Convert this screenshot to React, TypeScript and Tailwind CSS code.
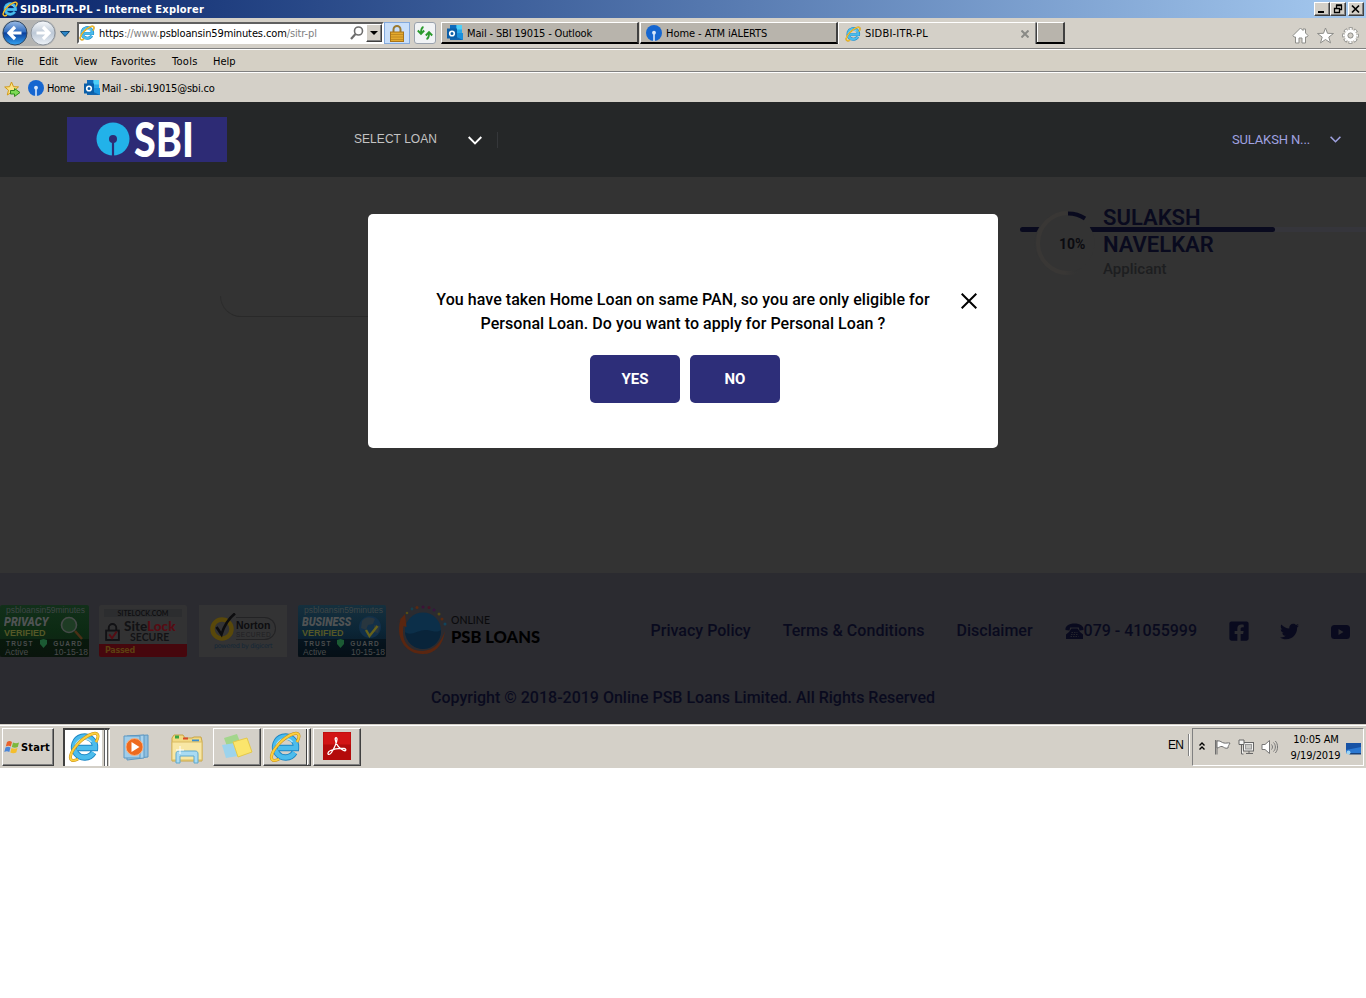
import React from "react";
import { FaFacebookSquare, FaTwitter } from "react-icons/fa";

const UI = "font-['DejaVu_Sans_Condensed','DejaVu_Sans',sans-serif] font-stretch-condensed text-[11px] leading-[14px] whitespace-nowrap";

/* ---------- icons ---------- */

function IeIcon({ className }: { className: string }) {
  return (
    <svg viewBox="0 0 32 32" className={className}>
      <path d="M25.5 21.5A10.5 10.5 0 1 1 27 17H9" fill="none" stroke="#1c86c4" strokeWidth="6.4" />
      <path d="M25.5 21.5A10.5 10.5 0 1 1 27 17H9" fill="none" stroke="#4cbcec" strokeWidth="4.6" />
      <path d="M7.5 14a9.5 9.5 0 0 1 16-3" fill="none" stroke="#a5e4fb" strokeWidth="1.6" />
      <path d="M28 11C32 4 29.500 1 24 3 14 6.500 4 18 2.500 25c-.8 4.500 2.500 6 7.500 3" fill="none" stroke="#c98f13" strokeWidth="3" />
      <path d="M28 11C32 4 29.500 1 24 3 14 6.500 4 18 2.500 25c-.8 4.500 2.500 6 7.500 3" fill="none" stroke="#fbcf3e" strokeWidth="2" />
    </svg>
  );
}

function OutlookIcon() {
  return (
    <svg viewBox="0 0 16 16" className="size-4 shrink-0">
      <path d="M3 0h12v9H3z" fill="#28a8ea" />
      <path d="M3 0h6.500v4.500H3z" fill="#0f6cbd" />
      <path d="M9.500 0H15v4.500H9.500z" fill="#4fd0f8" />
      <path d="M3 8h13v7H3z" fill="#1a8fdc" />
      <path d="M3 9l13 6H3z" fill="#1266b0" />
      <rect y="3.500" width="10" height="10" fill="#0a5ea8" />
      <circle cx="5" cy="8.500" r="2.300" fill="none" stroke="#fff" strokeWidth="1.600" />
    </svg>
  );
}

function SbiDot() {
  return (
    <svg viewBox="0 0 16 16" className="size-4 shrink-0">
      <circle cx="8" cy="8" r="8" fill="#1566d0" />
      <circle cx="8" cy="7.700" r="1.900" fill="#d9e8fb" />
      <path d="M8 8v8" stroke="#d9e8fb" strokeWidth="1.600" />
    </svg>
  );
}

function NavArrow({ forward }: { forward?: boolean }) {
  return (
    <svg viewBox="0 0 26 26" className="size-[26px] shrink-0">
      <defs>
        <linearGradient id="navBack" x1="0" y1="0" x2="0" y2="1">
          <stop offset="0" stopColor="#9dbde6" />
          <stop offset="0.450" stopColor="#2f6cc0" />
          <stop offset="0.500" stopColor="#0a3f9c" />
          <stop offset="1" stopColor="#35a4f2" />
        </linearGradient>
        <linearGradient id="navFwd" x1="0" y1="0" x2="0" y2="1">
          <stop offset="0" stopColor="#f8fafc" />
          <stop offset="0.500" stopColor="#bcc8d6" />
          <stop offset="1" stopColor="#eef3f8" />
        </linearGradient>
      </defs>
      <circle cx="13" cy="13" r="12" fill={forward ? "url(#navFwd)" : "url(#navBack)"} stroke={forward ? "#8e959d" : "#31465f"} />
      <path
        d={forward ? "M6.500 13h12M13 7l6 6-6 6" : "M19.500 13h-12M13 7l-6 6 6 6"}
        fill="none"
        stroke="#fff"
        strokeWidth="3.200"
      />
    </svg>
  );
}

function Phone() {
  return (
    <svg viewBox="0 0 19 16" className="mt-[4px] h-4 w-[19px] shrink-0">
      <path d="M.5 7C0 3 4 .5 9.500.5S19 3 18.500 7l-4 .6-.6-3H5.100l-.6 3z" fill="#090a1e" />
      <path d="M6.500 5.500h6L15 9l3 2.500V16H1v-4.500L4 9z" fill="#090a1e" />
      <path d="M6.500 9.500h6M6 11.500h7M5.500 13.500h8" stroke="#2b2b30" strokeWidth=".8" strokeDasharray="1.500 1" />
    </svg>
  );
}

/* ---------- browser chrome ---------- */

function CaptionButton({ children }: { children: React.ReactNode }) {
  return (
    <div className="flex h-[14px] w-4 items-center justify-center border border-t-white border-l-white border-r-[#404040] border-b-[#404040] bg-[#d4d0c8] shadow-[inset_-1px_-1px_0_#808080]">
      <svg viewBox="0 0 14 12" className="h-3 w-[14px] shrink-0" fill="none" stroke="#000">
        {children}
      </svg>
    </div>
  );
}

function TitleBar() {
  return (
    <div className="flex h-[18px] items-center bg-linear-to-r from-[#0a246a] to-[#a6caf0] pr-[2px] pl-[2px]">
      <IeIcon className="size-4" />
      <span className={`${UI} mt-px ml-[2px] grow font-bold tracking-[0.220px] text-white`}>SIDBI-ITR-PL - Internet Explorer</span>
      <div className="flex">
        <CaptionButton>
          <path d="M3 9h6" strokeWidth="2" />
        </CaptionButton>
        <CaptionButton>
          <path d="M5.500 5V2.500h5v4H8.500M5 2h6M3.500 5.500h5v4h-5zM3 5.500h6" strokeWidth="1.300" />
        </CaptionButton>
        <div className="w-[2px]" />
        <CaptionButton>
          <path d="M3 2.500l7 7M10 2.500l-7 7" strokeWidth="1.700" />
        </CaptionButton>
      </div>
    </div>
  );
}

function Tab({ icon, label, className }: { icon: React.ReactNode; label: string; className: string }) {
  return (
    <div className={`flex h-[22px] items-center border-t border-l border-r-2 border-white border-r-[#404040] pt-px pl-[5px] ${className}`}>
      {icon}
      <span className={`${UI} mt-[2px] ml-1 grow`}>{label}</span>
    </div>
  );
}

function NavBar() {
  return (
    <div className="flex h-[30px] items-start">
      <div className="mt-[2px] ml-[2px] flex gap-[2px] rounded-full bg-[#b4b4b2]">
        <NavArrow />
        <NavArrow forward />
      </div>
      <svg viewBox="0 0 10 6" className="mt-[13px] ml-[4px] h-[6px] w-[10px]">
        <path d="M.5.5h9L5 5.500z" fill="#2c86c8" stroke="#12466f" />
      </svg>
      <div className="mt-1 ml-[7px] flex h-[22px] w-[307px] items-center border-2 border-t-[#606060] border-r-white border-b-white border-l-[#606060] bg-white">
        <IeIcon className="size-4" />
        <span className={`${UI} mt-[2px] ml-1 grow tracking-[-0.120px] text-[#808080]`}>
          <span className="text-black">https</span>://www.<span className="text-black">psbloansin59minutes.com</span>/sitr-pl
        </span>
        <svg viewBox="0 0 14 14" className="mr-[2px] size-[14px]" fill="none" stroke="#6d6d6d">
          <circle cx="8.500" cy="5" r="4" strokeWidth="1.600" />
          <path d="M5.500 8L1 13" strokeWidth="2.200" />
        </svg>
        <div className="flex h-[18px] w-4 items-center justify-center border border-t-white border-r-[#404040] border-b-[#404040] border-l-white bg-[#d4d0c8] shadow-[inset_-1px_-1px_0_#808080]">
          <svg viewBox="0 0 8 4" className="h-1 w-2">
            <path d="M0 0h8L4 4z" />
          </svg>
        </div>
      </div>
      <div className="mt-1 flex h-[22px] w-[26px] items-center justify-center border border-[#83a9dc] bg-[#c9dffa]">
        <svg viewBox="0 0 14 17" className="h-[17px] w-[14px]">
          <path d="M3.500 8V4.500a3.500 3.500 0 0 1 7 0V8" fill="none" stroke="#9a7a32" strokeWidth="2" />
          <rect x=".5" y="7" width="13" height="9.500" fill="#e3a92d" stroke="#a8741a" />
          <path d="M1 9.500h12M1 12h12M1 14.500h12" stroke="#b98420" strokeWidth=".8" />
        </svg>
      </div>
      <div className="mt-1 ml-1 flex h-[22px] w-[22px] items-center justify-center rounded-[3px] border border-[#9aa2ad] bg-[#f1f3f5]">
        <svg viewBox="0 0 16 14" className="h-[14px] w-4" fill="none" stroke="#2a9a2c" strokeWidth="1.900">
          <path d="M6.500 1C4.500 1.500 4 3 4 7M.8 4.500L4 7.800l3.200-3.300" />
          <path d="M9.500 13c2-.5 2.500-2 2.500-6M8.800 9.500L12 6.200l3.200 3.300" />
        </svg>
      </div>
      <div className="mt-1 ml-[5px] flex grow">
        <Tab className="w-[198px] border-b-2 border-b-black bg-[#b8b4ac] tracking-[-0.150px]" icon={<OutlookIcon />} label="Mail - SBI 19015 - Outlook" />
        <Tab className="ml-px w-[198px] border-b-2 border-b-black bg-[#b8b4ac] tracking-[-0.060px]" icon={<SbiDot />} label="Home - ATM iALERTS" />
        <div className="flex h-[22px] w-[198px] items-center border-t border-r border-l border-white border-r-[#808080] pt-px pl-[6px]">
          <IeIcon className="size-4" />
          <span className={`${UI} ml-1 grow tracking-[0.200px]`}>SIDBI-ITR-PL</span>
          <svg viewBox="0 0 8 8" className="mr-[6px] size-2" stroke="#8a8a86" strokeWidth="2">
            <path d="M.5.5l7 7M7.500.5l-7 7" />
          </svg>
        </div>
        <div className="h-[22px] w-[29px] border-t border-r-2 border-b-2 border-l border-t-white border-r-[#404040] border-b-black border-l-[#404040] bg-[#b8b4ac] shadow-[inset_1px_0_0_#fff]" />
      </div>
      <div className="mt-[9px] flex gap-2 pr-[7px]">
        <svg viewBox="0 0 17 17" className="size-[17px]">
          <path d="M1 8.500L8.500 1 11 3.500V2h2.500v4L16 8.500 15 10h-1.500v6H10v-5H7v5H3.500v-6H2z" fill="#fff" stroke="#8d8d89" />
        </svg>
        <svg viewBox="0 0 17 17" className="size-[17px]">
          <path d="M8.500 1l2 5.300 6 .2-4.700 3.600 1.700 5.800-5-3.400-5 3.400 1.700-5.800L.5 6.500l6-.2z" fill="#fff" stroke="#8d8d89" />
        </svg>
        <svg viewBox="0 0 17 17" className="size-[17px]">
          <circle cx="8.500" cy="8.500" r="6.600" fill="none" stroke="#8d8d89" strokeWidth="3.400" strokeDasharray="3.584 1.600" strokeDashoffset="1.792" />
          <circle cx="8.500" cy="8.500" r="6.600" fill="none" stroke="#fff" strokeWidth="1.800" strokeDasharray="2.184 3" strokeDashoffset="1.092" />
          <circle cx="8.500" cy="8.500" r="4.300" fill="#d4d0c8" stroke="#fff" strokeWidth="3.400" />
          <circle cx="8.500" cy="8.500" r="2.600" fill="#d4d0c8" stroke="#8d8d89" />
        </svg>
      </div>
    </div>
  );
}

function Chrome() {
  return (
    <div className="flex h-[102px] flex-col bg-[#d4d0c8]">
      <TitleBar />
      <NavBar />
      <div className={`${UI} flex h-6 items-center border-t border-b border-t-[#808080] border-b-[#808080] bg-[#d5d0c5] pt-[3px] pl-[7px] shadow-[inset_0_1px_0_#fff]`}>
        <span className="w-8">File</span>
        <span className="w-[35px]">Edit</span>
        <span className="w-[37px]">View</span>
        <span className="w-[61px]">Favorites</span>
        <span className="w-[41px] tracking-[0.300px]">Tools</span>
        <span>Help</span>
      </div>
      <div className={`${UI} flex grow items-center border-t border-white pl-1`}>
        <svg viewBox="0 0 17 17" className="mt-[3px] size-[17px]">
          <path d="M7.500 1l2 4.700 5 .2-3.900 3.300 1.400 4.800-4.500-2.700L3.300 14l1.200-4.800L.7 6l4.900-.3z" fill="#fbe386" stroke="#d29a17" />
          <path d="M6.500 9.500h4V7.500l5.500 4-5.500 4v-2.500h-4z" fill="#7ddb55" stroke="#318b1e" />
        </svg>
        <span className="ml-[7px] flex items-center gap-[3px] tracking-[-0.400px]">
          <SbiDot />
          <span className="mt-[3px]">Home</span>
        </span>
        <span className="ml-[9px] flex items-center gap-[2px] tracking-[-0.200px]">
          <OutlookIcon />
          <span className="mt-[3px]">Mail - sbi.19015@sbi.co</span>
        </span>
      </div>
    </div>
  );
}

/* ---------- site ---------- */

function SiteHeader() {
  return (
    <header className="flex h-[75px] items-center bg-[#252728] pl-[67px]">
      <div className="flex h-[45px] w-[160px] items-center bg-[#2d2b75] pl-[29px]">
        <svg viewBox="0 0 34 34" className="-mt-px size-[34px] shrink-0">
          <circle cx="17" cy="17" r="16.500" fill="#22b2e9" />
          <circle cx="17" cy="17" r="4" fill="#2d2b75" />
          <path d="M17 18v16" stroke="#2d2b75" strokeWidth="2.200" />
        </svg>
        <span className="ml-1 w-[59px] origin-left scale-x-[0.840] font-[Lato,sans-serif] text-[47px] leading-[45px] font-black text-white">SBI</span>
      </div>
      <span className="-mt-[2px] ml-[127px] w-[114px] font-['Liberation_Sans',sans-serif] text-[12px] tracking-[0.050px] text-[#c3c3c3]">SELECT LOAN</span>
      <svg viewBox="0 0 14 9" className="mt-px h-[9px] w-[14px]" fill="none" stroke="#fff" strokeWidth="1.900">
        <path d="M.7 1L7 7.500 13.300 1" />
      </svg>
      <div className="ml-[15px] h-4 w-px bg-[#35373a]" />
      <span className="mr-[20px] ml-auto font-[Roboto,sans-serif] text-[13px] tracking-[-0.130px] text-[#a0a2e0]">SULAKSH N...</span>
      <svg viewBox="0 0 11 7" className="mr-[25px] h-[7px] w-[11px]" fill="none" stroke="#a0a2e0" strokeWidth="1.600">
        <path d="M.6.8L5.500 5.700 10.400.8" />
      </svg>
    </header>
  );
}

function Applicant() {
  return (
    <div className="relative ml-auto h-[110px] w-[346px] overflow-hidden">
      <div className="absolute top-[50px] left-0 h-[5px] w-[400px] rounded-full bg-[#35353b]">
        <div className="h-[5px] w-[255px] rounded-full bg-[#090a1e]" />
      </div>
      <svg viewBox="0 0 72 72" className="absolute top-[30px] left-3 size-[72px]" fill="none">
        <defs>
          <linearGradient id="ring" x1="0" y1="0" x2="1" y2="0">
            <stop offset="0" stopColor="#393735" />
            <stop offset="0.450" stopColor="#393735" />
            <stop offset="0.700" stopColor="#333333" stopOpacity="0" />
          </linearGradient>
        </defs>
        <circle cx="32.500" cy="36" r="30" fill="#333333" />
        <circle cx="36" cy="36" r="30" stroke="url(#ring)" strokeWidth="4" />
        <path d="M36 6.500A30 30 0 0 1 53 11.500" stroke="#090a1e" strokeWidth="4" />
      </svg>
      <span className="absolute top-[57px] left-[39px] font-[Roboto,sans-serif] text-[14px] leading-5 font-bold text-[#0b0b10]">10%</span>
      <div className="absolute top-[27px] left-[83px] w-[130px] font-[Roboto,sans-serif]">
        <div className="text-[22px] leading-[27px] font-semibold text-[#090a1e]">SULAKSH NAVELKAR</div>
        <div className="mt-px text-[15px] leading-[20px] font-medium text-[#1d1e20]">Applicant</div>
      </div>
    </div>
  );
}

function Dialog() {
  return (
    <div className="absolute top-[37px] left-[368px] flex h-[234px] w-[630px] flex-col items-center rounded-[5px] bg-white pt-[74px] font-[Roboto,sans-serif]">
      <p className="w-[520px] text-center text-[16px] leading-6 font-medium tracking-[0.050px] text-black">
        You have taken Home Loan on same PAN, so you are only eligible for
        <br />
        Personal Loan. Do you want to apply for Personal Loan ?
      </p>
      <div className="mt-[19px] flex gap-[10px] pl-1 text-[15px] font-bold text-white">
        <button className="h-12 w-[90px] rounded-[5px] bg-[#2d2e79]">YES</button>
        <button className="h-12 w-[90px] rounded-[5px] bg-[#2d2e79]">NO</button>
      </div>
      <svg viewBox="0 0 16 16" className="absolute top-[79px] left-[593px] size-4" stroke="#000" strokeWidth="2">
        <path d="M.7.700l14.600 14.600M15.300.700L.7 15.300" />
      </svg>
    </div>
  );
}

function TrustBadge({ word, tone }: { word: string; tone: "green" | "blue" }) {
  const green = tone === "green";
  return (
    <div
      className={`relative flex h-[52px] shrink-0 flex-col rounded-[2px] pl-1 font-['Liberation_Sans',sans-serif] text-[#4a4c4c] ${
        green ? "w-[89px] bg-linear-to-b from-[#12301a] via-[#0c2a13] to-[#0e2013]" : "w-[88px] bg-linear-to-b from-[#15303e] via-[#0b2536] to-[#081722]"
      }`}
    >
      <span className="h-[11px] pl-[2px] text-[8.500px] leading-[11px] tracking-[-0.050px] text-[#3f4545]">psbloansin59minutes</span>
      <span className={`h-[11px] w-[60px] origin-left font-[Roboto,sans-serif] text-[13px] leading-[11px] font-black text-[#505354] italic ${green ? "scale-x-[0.840]" : "scale-x-[0.820]"}`}>{word}</span>
      <span className="h-[12px] text-[9px] leading-[12px] font-bold text-[#555827]">VERIFIED</span>
      <div className="-ml-1 flex h-[18px] flex-col bg-black/35 pl-1">
        <span className="flex h-[9px] items-center justify-between pr-[6px] pl-[2px] text-[6.500px] leading-[9px] font-bold tracking-[1.200px]">
          <span>TRUST</span>
          <svg viewBox="0 0 7 9" className="h-[9px] w-[7px]">
            <path d="M0 1l3.500-1L7 1v4L3.500 9 0 5z" fill="#1b5a33" />
          </svg>
          <span>GUARD</span>
        </span>
        <span className="flex h-[9px] justify-between pr-px pl-px text-[8.500px] leading-[9px]">
          <span>Active</span>
          <span>10-15-18</span>
        </span>
      </div>
      {green ? (
        <svg viewBox="0 0 26 26" className="absolute top-[10px] left-[59px] size-[26px]" fill="none">
          <circle cx="10" cy="10" r="7.500" fill="#1e3c24" stroke="#454a48" strokeWidth="1.600" />
          <path d="M16 16l7 8" stroke="#4b3016" strokeWidth="2.500" />
        </svg>
      ) : (
        <svg viewBox="0 0 26 26" className="absolute top-[10px] left-[60px] size-[26px]" fill="none">
          <circle cx="12" cy="12" r="11" fill="#123049" />
          <path d="M4 6c4-5 9-4 13-2l-2 5-5 1-2 5-5-2zM16 10l6 1-2 7-4-1z" fill="#28363f" />
          <path d="M8 15l3.500 6 8-10" stroke="#66621b" strokeWidth="2.400" />
        </svg>
      )}
    </div>
  );
}

function SiteLock() {
  return (
    <div className="ml-[10px] flex h-[52px] w-[88px] shrink-0 flex-col overflow-hidden rounded-[2px] bg-[#323233]">
      <span className="mx-[5px] mt-1 h-2 bg-[#2c2d2f] text-center font-[Lato,sans-serif] text-[7px] leading-[8px] font-bold text-[#101012]">SITELOCK.COM</span>
      <div className="flex h-[27px] items-center pt-[2px] pl-[6px]">
        <svg viewBox="0 0 16 19" className="h-[18px] w-[15px] shrink-0" fill="none">
          <path d="M4 8V5a4 4 0 0 1 8 0v3" stroke="#111114" strokeWidth="2" />
          <rect x="1.200" y="8" width="13.600" height="10" stroke="#111114" strokeWidth="2" />
          <path d="M4.500 12l3 4 5-7" stroke="#560c13" strokeWidth="2" />
        </svg>
        <div className="ml-1 font-[Lato,sans-serif] font-black">
          <div className="h-[12px] text-[13.500px] leading-[12px] text-[#121215]">
            Site<span className="text-[#560c13]">Lock</span>
          </div>
          <div className="h-[11px] pl-[6px] text-[10.500px] leading-[11px] font-bold text-[#121215]">SECURE</div>
        </div>
      </div>
      <div className="grow bg-[#46070d] pl-[6px] font-['DejaVu_Sans',sans-serif] text-[8px] leading-[13px] font-bold tracking-[-0.300px] text-[#5c4011]">Passed</div>
    </div>
  );
}

function Norton() {
  return (
    <div className="ml-3 flex h-[52px] w-[88px] shrink-0 flex-col items-center bg-[#333334] pt-[10px]">
      <div className="flex h-[26px] items-center">
        <svg viewBox="0 0 26 28" className="-mt-[3px] h-[28px] w-[26px]" fill="none">
          <circle cx="12" cy="16" r="9.500" stroke="#59480a" strokeWidth="4.500" />
          <path d="M6.500 14l5 7.500C14 13 18 6 25 .500" stroke="#0c0c0e" strokeWidth="2.600" />
        </svg>
        <div className="h-[23px] w-[40px] rounded-r-full border border-l-0 border-[#232325] font-['Liberation_Sans',sans-serif]">
          <div className="mt-[3px] h-[9px] text-[10.500px] leading-[9px] font-bold text-[#0d0d0f]">Norton</div>
          <div className="text-[6.500px] leading-[9px] tracking-[0.500px] text-[#202023]">SECURED</div>
        </div>
      </div>
      <div className="mt-[2px] font-['DejaVu_Sans',sans-serif] text-[6.500px] leading-[7px] tracking-[-0.350px] whitespace-nowrap text-[#132736]">powered by digicert</div>
    </div>
  );
}

function PsbLogo() {
  return (
    <div className="ml-[11px] flex h-[52px] items-center">
      <svg viewBox="0 0 50 52" className="h-[52px] w-[50px] shrink-0" fill="none">
        <circle cx="26" cy="25.500" r="18" fill="#0c2f49" />
        <path d="M8 27c6 5 14-3 22-2 6 1 10 3 14 0a18 18 0 0 1-36 2z" fill="#09243a" />
        <path d="M4 13C-2 30 6 48 25 49c12 .5 21-8 23-23-4 12-11 19-22 20C11 46 4 36 6.500 21l3 1L8 9 0 18z" fill="#5a2610" />
        <g>
          <circle cx="10" cy="8" r="1.300" fill="#554c14" />
          <circle cx="15" cy="4" r="1.400" fill="#16404c" />
          <circle cx="20" cy="2.500" r="1.500" fill="#5a2a10" />
          <circle cx="26" cy="2" r="1.500" fill="#3c1238" />
          <circle cx="32" cy="2.500" r="1.500" fill="#471426" />
          <circle cx="37" cy="5" r="1.500" fill="#37153f" />
          <circle cx="42" cy="9" r="1.500" fill="#544c14" />
          <circle cx="45" cy="14" r="1.500" fill="#5a2a10" />
          <circle cx="48" cy="19" r="1.500" fill="#12445c" />
        </g>
      </svg>
      <div className="-mt-[2px] ml-1 font-[Lato,sans-serif] text-black">
        <div className="text-[10.500px] leading-[13px] text-[#0a0a0c]">ONLINE</div>
        <div className="mt-px text-[16.500px] leading-[19px] font-black whitespace-nowrap">PSB LOANS</div>
      </div>
    </div>
  );
}

function SiteFooter() {
  return (
    <footer className="flex h-[151px] flex-col bg-[#2b2b30] pt-8 font-[Roboto,sans-serif] text-[16px] font-medium text-[#090a1e]">
      <div className="flex h-[52px]">
        <TrustBadge word="PRIVACY" tone="green" />
        <SiteLock />
        <Norton />
        <div className="w-[11px] shrink-0" />
        <TrustBadge word="BUSINESS" tone="blue" />
        <PsbLogo />
        <div className="mt-[14px] mr-4 ml-auto flex h-6 items-start gap-8 leading-6 whitespace-nowrap">
          <span>Privacy Policy</span>
          <span className="tracking-[0.060px]">Terms &amp; Conditions</span>
          <span>Disclaimer</span>
          <span className="flex">
            <Phone />
            079 - 41055999
          </span>
          <FaFacebookSquare className="-mr-[2px] -ml-[1px] mt-px size-[22px] shrink-0" />
          <FaTwitter className="mt-[3px] size-[19px] shrink-0" />
          <svg viewBox="0 0 19 14" className="mt-[6px] h-[14px] w-[19px] shrink-0">
            <rect width="19" height="14" rx="3.500" fill="#090a1e" />
            <path d="M7.500 4l5 3-5 3z" fill="#2b2b30" />
          </svg>
        </div>
      </div>
      <div className="mt-[29px] text-center leading-6">Copyright © 2018-2019 Online PSB Loans Limited. All Rights Reserved</div>
    </footer>
  );
}

/* ---------- taskbar ---------- */

const raised = "border border-t-white border-l-white border-r-[#404040] border-b-[#404040] shadow-[inset_-1px_-1px_0_#808080]";

function Taskbar() {
  return (
    <div className="flex h-11 items-start border-t border-[#d4d0c8] bg-[#d4d0c8] pt-[3px] pr-[2px] pl-[2px] shadow-[inset_0_1px_0_#fff]">
      <div className={`flex h-[38px] w-[52px] items-center pl-px ${raised}`}>
        <svg viewBox="0 0 16 15" className="h-[15px] w-4 shrink-0">
          <path d="M3 2c2-1.500 3.500-1 5 0L6.800 6.500c-1.500-1-3-1.300-5 0z" fill="#e8622c" />
          <path d="M9 2.500c2 1 4 1 6 0L13.800 7c-2 1-4 1-6 0z" fill="#7cb83c" />
          <path d="M1.500 7.500c2-1.300 3.500-1 5 0L5.300 12c-1.500-1-3-1.300-5 0z" fill="#4a86d8" />
          <path d="M7.500 8c2 1 4 1 6 0l-1.200 4.500c-2 1-4 1-6 0z" fill="#f4be2c" />
        </svg>
        <span className={`${UI} ml-px pt-px font-bold tracking-[0.150px]`}>Start</span>
      </div>

      <div className="ml-[9px] flex h-[38px] w-[50px]">
        <div className="flex w-[39px] items-center justify-center border-t-2 border-l-2 border-[#404040] bg-white">
          <IeIcon className="-mt-[3px] size-8 shrink-0" />
        </div>
        <div className="w-[2px] border-t-2 border-t-[#404040] bg-[#d4d0c8]" />
        <div className="w-[3px] border-t-2 border-l border-t-[#404040] border-l-[#606060] bg-white" />
        <div className="w-[3px] border-t-2 border-r border-l border-t-[#404040] border-r-white border-l-[#606060]" />
      </div>

      <div className="flex h-[38px] w-[50px] items-center pl-[9px]">
        <svg viewBox="0 0 30 28" className="h-7 w-[30px]">
          <path d="M8 3l18-1v22l-18 2z" fill="#8fbede" stroke="#5d97c2" />
          <path d="M5 3l17-1v23l-17 2z" fill="#a9d2ec" stroke="#5d97c2" />
          <path d="M2 3h16v22H2z" fill="#9fcdea" stroke="#5d97c2" />
          <circle cx="12.500" cy="14" r="8.500" fill="#ee6a1e" stroke="#f7b083" />
          <path d="M9.500 9l8 5-8 5z" fill="#fff" />
        </svg>
      </div>

      <div className="flex h-[38px] w-[50px] items-center pl-2">
        <svg viewBox="0 0 32 30" className="mt-[3px] h-[30px] w-8">
          <path d="M1 4l2-3h9l2 3h7l2-1h7l1 4v20H1z" fill="#f2d982" stroke="#c9a544" />
          <path d="M4 1.500h4v3H4z" fill="#39a642" />
          <path d="M12 3.500h5v2h-5z" fill="#d8492a" />
          <path d="M21 5.500h7v2h-7z" fill="#3f8fcb" />
          <path d="M1 8h30v18H1z" fill="#f8e7a4" stroke="#d9bb62" />
          <path d="M5 29V20c0-2 1-3 3-3h16c2 0 3 1 3 3v9h-4v-7H9v7z" fill="#a9dbf2" stroke="#5fa8cd" />
          <path d="M9 12v8M5 16h8" stroke="#fff" />
        </svg>
      </div>

      <div className={`flex h-[38px] w-12 items-center justify-center ${raised}`}>
        <svg viewBox="0 0 32 28" className="h-7 w-8">
          <path d="M3 5l13-4 5 13-13 5z" fill="#a3d68c" />
          <path d="M1 12l13-2 3 13-12 2z" fill="#9cd3ec" />
          <path d="M12 9l14-4 5 14-14 5z" fill="#fbe56c" stroke="#e4c94b" />
        </svg>
      </div>

      <div className={`ml-[2px] flex h-[38px] w-12 items-center ${raised}`}>
        <div className="flex h-9 w-[43px] items-center justify-center border-r border-[#404040]">
          <IeIcon className="size-8" />
        </div>
        <div className="h-9 w-px bg-white" />
      </div>

      <div className={`ml-[2px] flex h-[38px] w-12 items-start justify-center pt-[3px] ${raised}`}>
        <svg viewBox="0 0 28 28" className="h-7 w-7">
          <rect width="28" height="28" fill="#b30b0b" />
          <rect x=".5" y=".5" width="27" height="12" fill="#d21414" />
          <path
            d="M5 21c-.5 2 2 2 3.500-.5C11 16.500 13.500 12 14 7.500c0-2.500-2-2.500-1.800 0C12.700 12 16.500 17 20.500 18.500c2.500.8 3.500-1.500.5-2-4-.5-10 .5-13.500 2C6 19.200 5.200 20 5 21z"
            fill="none"
            stroke="#fff"
            strokeWidth="1.300"
          />
        </svg>
      </div>

      <div className="ml-auto flex h-[38px] items-start">
        <span className="mt-[9px] font-['Liberation_Sans',sans-serif] text-[12px] leading-4 tracking-[-0.800px]">EN</span>
        <div className="mt-[6px] ml-[5px] h-[22px] w-[2px] border-l border-[#808080] bg-white" />
        <div className="ml-[2px] flex h-[38px] w-[172px] items-center border border-t-[#808080] border-r-white border-b-white border-l-[#808080] pl-[6px]">
          <svg viewBox="0 0 6 8" className="-mt-[2px] h-2 w-[6px]" fill="none" stroke="#000" strokeWidth="1.400">
            <path d="M.5 3.500L3 1l2.500 2.500M.5 7.500L3 5l2.500 2.500" />
          </svg>
          <svg viewBox="0 0 17 16" className="ml-[9px] h-4 w-[17px]" fill="#fff" stroke="#6f6f6f">
            <path d="M1.500 1v14.500M3 1v14.500" fill="none" />
            <path d="M3 2c3-1 5 2 7 2 2 .5 4-.5 6 0-1 2-2 3-2 5-3 1-4-1-6-1.500S5 9 3 9z" />
          </svg>
          <svg viewBox="0 0 17 16" className="ml-[7px] h-4 w-[17px]" fill="#f4f4f2" stroke="#666">
            <rect x="5.500" y="3.500" width="10" height="8.500" />
            <rect x="7.500" y="5.500" width="6" height="4.500" fill="#c9c9c5" stroke="#999" />
            <path d="M8 14.500h7M11 12v2" fill="none" />
            <path d="M1 1h5v4.500H1zM3.500 5.500V15h2" />
          </svg>
          <svg viewBox="0 0 17 16" className="ml-[6px] h-4 w-[17px]" fill="#fff" stroke="#777">
            <path d="M1 5.500h3L8.500 1.500v13L4 10.500H1z" />
            <path d="M10.500 5.500c1.300 1.500 1.300 3.500 0 5M12.500 3.500c2.500 2.500 2.500 6.500 0 9M14.300 2c3 3 3 9 0 12" fill="none" />
          </svg>
          <div className={`${UI} ml-[13px] w-[50px] pt-[2px] text-center leading-[16px]`}>
            <div className="leading-4 tracking-[-0.200px]">10:05 AM</div>
            <div className="-ml-px leading-4 tracking-[-0.100px]">9/19/2019</div>
          </div>
          <svg viewBox="0 0 15 12" className="mt-[3px] ml-[5px] h-3 w-[15px] shrink-0">
            <path d="M0 0h15v10H0z" fill="#2b78d2" />
            <path d="M0 0h15v4L0 7z" fill="#1752a5" />
            <path d="M0 10h15v1.500H4z" fill="#174078" />
            <circle cx="2.500" cy="9.500" r="2" fill="#9cd3f2" />
          </svg>
        </div>
      </div>
    </div>
  );
}

export default function App() {
  return (
    <div className="flex h-[998px] w-[1366px] flex-col overflow-hidden bg-white text-black">
      <Chrome />
      <SiteHeader />
      <main className="relative flex h-[396px] flex-col bg-[#333333]">
        <Applicant />
        <div className="mt-[9px] ml-[220px] h-[21px] w-[200px] rounded-bl-[22px] border-b border-l border-b-[#292929] border-l-[#2c2c2c]" />
        <Dialog />
      </main>
      <SiteFooter />
      <Taskbar />
    </div>
  );
}
